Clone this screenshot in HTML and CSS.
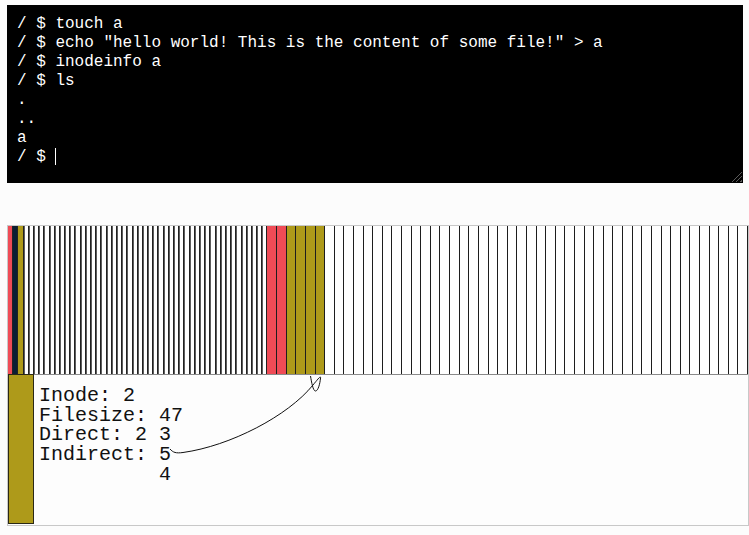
FILE: index.html
```html
<!DOCTYPE html>
<html lang="en">
<head>
<meta charset="utf-8">
<title>Filesystem</title>
<link rel="stylesheet" href="styles.css">
</head>
<body>
<div class="term"><pre class="term-text">/ $ touch a
/ $ echo "hello world! This is the content of some file!" &gt; a
/ $ inodeinfo a
/ $ ls
.
..
a
/ $ <span class="caret"></span></pre><span class="grip"></span></div>

<div class="disk">
  <div class="strip">
    <div class="c n red"></div><div class="c n navy"></div><div class="c n olive"></div>
    <div class="c n p"></div><div class="c n p"></div><div class="c n p"></div><div class="c n p"></div><div class="c n p"></div><div class="c n p"></div><div class="c n p"></div>
    <div class="c n p"></div><div class="c n p"></div><div class="c n p"></div><div class="c n p"></div><div class="c n p"></div><div class="c n p"></div><div class="c n p"></div><div class="c n p"></div><div class="c n p"></div><div class="c n p"></div>
    <div class="c n p"></div><div class="c n p"></div><div class="c n p"></div><div class="c n p"></div><div class="c n p"></div><div class="c n p"></div><div class="c n p"></div><div class="c n p"></div><div class="c n p"></div><div class="c n p"></div>
    <div class="c n p"></div><div class="c n p"></div><div class="c n p"></div><div class="c n p"></div><div class="c n p"></div><div class="c n p"></div><div class="c n p"></div><div class="c n p"></div><div class="c n p"></div><div class="c n p"></div>
    <div class="c n p"></div><div class="c n p"></div><div class="c n p"></div><div class="c n p"></div><div class="c n p"></div><div class="c n p"></div><div class="c n p"></div><div class="c n p"></div><div class="c n p"></div><div class="c n p"></div>
    <div class="c red"></div><div class="c red"></div><div class="c olive"></div><div class="c olive"></div><div class="c olive"></div><div class="c olive"></div>
    <div class="c"></div><div class="c"></div><div class="c"></div><div class="c"></div>
    <div class="c"></div><div class="c"></div><div class="c"></div><div class="c"></div><div class="c"></div><div class="c"></div><div class="c"></div><div class="c"></div><div class="c"></div><div class="c"></div>
    <div class="c"></div><div class="c"></div><div class="c"></div><div class="c"></div><div class="c"></div><div class="c"></div><div class="c"></div><div class="c"></div><div class="c"></div><div class="c"></div>
    <div class="c"></div><div class="c"></div><div class="c"></div><div class="c"></div><div class="c"></div><div class="c"></div><div class="c"></div><div class="c"></div><div class="c"></div><div class="c"></div>
    <div class="c"></div><div class="c"></div><div class="c"></div><div class="c"></div><div class="c"></div><div class="c"></div><div class="c"></div><div class="c"></div><div class="c"></div><div class="c"></div>
  </div>
  <div class="info">
    <div class="inode-box"></div>
    <pre class="info-text">Inode: 2
Filesize: 47
Direct: 2 3
Indirect: 5
          4</pre>
  </div>
</div>

<svg class="link" width="749" height="535" viewBox="0 0 749 535">
  <path d="M170 449 C173 452.5 176 453.5 183 452.5 C230 446 288 416 313 385 C318 379 321 375 320.5 378 C320 384 318 391 315.5 391 C313 391 311.5 382 310.5 376" fill="none" stroke="#111" stroke-width="1"/>
</svg>
</body>
</html>
```

FILE: styles.css
```css
html, body {
  margin: 0;
  padding: 0;
}

body {
  position: relative;
  width: 749px;
  height: 535px;
  background: #fcfcfc;
  overflow: hidden;
}

.term {
  position: relative;
  box-sizing: border-box;
  margin: 5px 0 0 7px;
  width: 736px;
  height: 178px;
  padding: 10px 10px;
  background: #000;
}

.term-text {
  margin: 0;
  font-family: "Liberation Mono", monospace;
  font-size: 16px;
  line-height: 19px;
  color: #fff;
}

.caret {
  display: inline-block;
  width: 1px;
  height: 17px;
  background: #fff;
  vertical-align: -4px;
}

.grip {
  position: absolute;
  right: 1px;
  bottom: 1px;
  width: 11px;
  height: 11px;
  background: repeating-linear-gradient(135deg, #000 0 2px, #5a5a5a 2px 3px);
  clip-path: polygon(100% 0, 100% 100%, 0 100%);
}

.disk {
  box-sizing: border-box;
  margin: 42px 0 0 7px;
  width: 742px;
  height: 301px;
  border: 1px solid #c8c8c8;
  background: #fdfdfd;
  display: flex;
  flex-direction: column;
}

.strip {
  display: grid;
  grid-template-columns: repeat(50, 1fr) repeat(50, 1.852fr);
  height: 149px;
  box-sizing: border-box;
  border-bottom: 1px solid #8a8a8a;
}

.c {
  box-sizing: border-box;
  border-right: 1px solid #1e1e1e;
  background: #fff;
}

.c.n {
  border-right: 1px solid #222;
}

.c.p {
  box-shadow: inset 1px 0 0 #5e5e5e;
}

.c.red {
  background: #ef4b56;
}

.c.navy {
  background: #0b1e33;
}

.c.olive {
  background: #ae9a1a;
}

.info {
  display: flex;
  flex: 1;
}

.inode-box {
  box-sizing: border-box;
  width: 26px;
  height: 150px;
  margin-top: -1px;
  border: 1px solid #2a2816;
  background: #ae9a1a;
}

.info-text {
  margin: 11px 0 0 5px;
  font-family: "Liberation Mono", monospace;
  font-size: 20px;
  line-height: 19.7px;
  color: #111;
}

.link {
  position: absolute;
  left: 0;
  top: 0;
  pointer-events: none;
}
```
